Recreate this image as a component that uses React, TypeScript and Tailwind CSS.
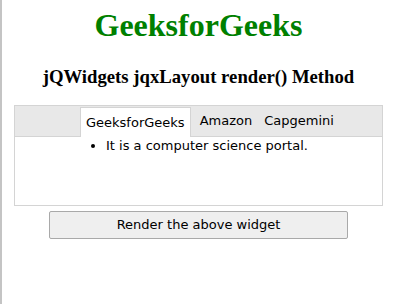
export default function App() {
  const tabs = ['GeeksforGeeks', 'Amazon', 'Capgemini'];

  return (
    <div className="min-h-[304px] w-[410px] border-l-2 border-[#c4c4c4] bg-white">
      <div className="flex w-[393px] flex-col items-center">
        <h1 className="mt-[7px] text-[32px] leading-[37px] font-bold text-[#008000] [font-family:'Liberation_Serif',serif]">
          GeeksforGeeks
        </h1>
        <h3 className="mt-[22px] text-[18.72px] leading-[22px] font-bold text-black [font-family:'Liberation_Serif',serif]">
          jQWidgets jqxLayout render() Method
        </h3>

        <div className="mt-[17px] h-[101px] w-[369px] border border-[#d4d4d4] bg-white text-[13px] text-black [font-family:'DejaVu_Sans',Verdana,sans-serif]">
          <div className="flex h-[31px] items-end border-b border-[#d4d4d4] bg-[#e8e8e8] pl-[65px]">
            {tabs.map((t, i) => (
              <div
                key={t}
                className={
                  i === 0
                    ? 'relative -mb-px flex h-[30px] items-center border border-b-0 border-[#d4d4d4] bg-white px-[5px]'
                    : i === 1
                      ? 'ml-[3px] flex h-[30px] items-center px-[6px]'
                      : 'flex h-[30px] items-center px-[6px]'
                }
              >
                {t}
              </div>
            ))}
          </div>
          <ul className="list-disc pl-[91px] leading-[18px]">
            <li>It is a computer science portal.</li>
          </ul>
        </div>

        <button className="mt-[5px] h-[28px] w-[299px] rounded-[2px] border border-[#a9a9a9] bg-[#efefef] text-[13px] text-black [font-family:'DejaVu_Sans',Verdana,sans-serif]">
          Render the above widget
        </button>
      </div>
    </div>
  );
}
